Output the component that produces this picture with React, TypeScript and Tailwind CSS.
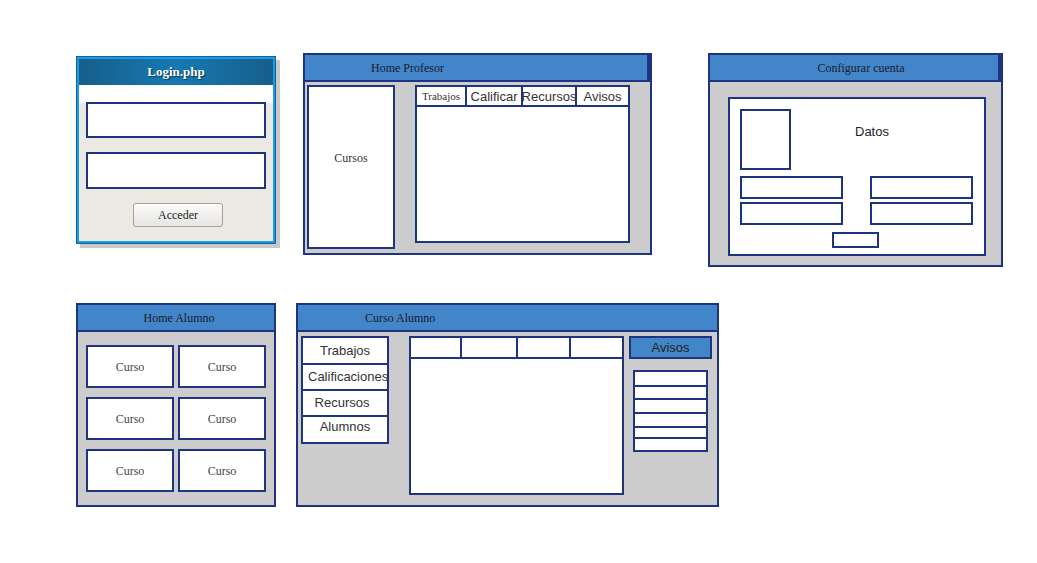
const serif = "font-['Liberation_Serif',serif]";
const sans = "font-['Liberation_Sans',Arial,sans-serif]";

const box = "border-2 border-[#1f3480] bg-white";

function Header({ title, className = "" }: { title: string; className?: string }) {
  return (
    <div
      className={`h-[27px] shrink-0 bg-[#4385c9] border-b-2 border-r-[3px] border-[#1f3480] flex items-center text-[12px] text-[#1a1a2a] ${serif} ${className}`}
    >
      {title}
    </div>
  );
}

function LoginPanel() {
  return (
    <div className="absolute left-[77px] top-[57px] w-[198px] h-[186px] border-2 border-[#1d9be0] shadow-[0_0_0_1px_#0e62a0,4px_4px_0_1px_#c9c9c9] flex flex-col">
      <div
        className={`h-[26px] shrink-0 bg-[linear-gradient(90deg,#175e88,#1679b3_50%,#175e88)] flex items-center justify-center text-white font-bold text-[13px] [text-shadow:1px_1px_1px_#0b3550] ${serif}`}
      >
        Login.php
      </div>
      <div className="flex-1 bg-[linear-gradient(#fff_0,#fff_18px,#ece9e3_18px)] flex flex-col pl-[7px] pt-[17px]">
        <div className={`${box} w-[180px] h-[36px]`} />
        <div className={`${box} w-[180px] h-[37px] mt-[14px]`} />
        <button
          className={`mt-[14px] ml-[47px] w-[90px] h-[24px] rounded-[3px] border border-[#a8a090] bg-[linear-gradient(#fbfbfb,#e6e5e2)] text-[12px] text-[#222] ${serif}`}
        >
          Acceder
        </button>
      </div>
    </div>
  );
}

function HomeProfesor() {
  const tabs = [
    { label: "Trabajos", w: "w-[50px]", f: `${serif} text-[11px]` },
    { label: "Calificar", w: "w-[56px]", f: `${sans} text-[13px]` },
    { label: "Recursos", w: "w-[54px]", f: `${sans} text-[13px]` },
    { label: "Avisos", w: "flex-1", f: `${sans} text-[13px]` },
  ];
  return (
    <div className="absolute left-[303px] top-[53px] w-[349px] h-[202px] border-2 border-[#1f3480] bg-[#cccccc] flex flex-col">
      <Header title="Home Profesor" className="pl-[66px]" />
      <div className="flex pt-[3px] pl-[2px]">
        <div className={`${box} w-[88px] h-[164px] flex justify-center pt-[62px] text-[12px] text-[#333] ${serif}`}>
          Cursos
        </div>
        <div className={`${box} ml-[20px] w-[215px] h-[158px] flex flex-col`}>
          <div className="flex h-[20px] border-b-2 border-[#1f3480]">
            {tabs.map((t, i) => (
              <div
                key={t.label}
                className={`${t.w} ${t.f} ${i < 3 ? "border-r-2 border-[#1f3480]" : ""} flex items-center justify-center whitespace-nowrap overflow-visible text-[#333] leading-none`}
              >
                {t.label}
              </div>
            ))}
          </div>
        </div>
      </div>
    </div>
  );
}

function ConfigurarCuenta() {
  return (
    <div className="absolute left-[708px] top-[53px] w-[295px] h-[214px] border-2 border-[#1f3480] bg-[#cccccc] flex flex-col">
      <Header title="Configurar cuenta" className="justify-center pl-[14px]" />
      <div className={`${box} ml-[18px] mt-[15px] w-[258px] h-[159px] flex flex-col pl-[10px] pt-[10px]`}>
        <div className="flex">
          <div className={`${box} w-[51px] h-[61px]`} />
          <div className={`ml-[64px] mt-[13px] text-[13px] text-[#222] ${sans}`}>Datos</div>
        </div>
        <div className="grid grid-cols-[103px_103px] gap-x-[27px] gap-y-[3px] mt-[6px]">
          <div className={`${box} h-[23px]`} />
          <div className={`${box} h-[23px]`} />
          <div className={`${box} h-[23px]`} />
          <div className={`${box} h-[23px]`} />
        </div>
        <div className={`${box} w-[47px] h-[16px] mt-[7px] ml-[92px]`} />
      </div>
    </div>
  );
}

function HomeAlumno() {
  return (
    <div className="absolute left-[76px] top-[303px] w-[200px] h-[204px] border-2 border-[#1f3480] bg-[#cccccc] flex flex-col">
      <Header title="Home Alumno" className="justify-center pl-[6px] !border-r-0" />
      <div className="grid grid-cols-[88px_88px] gap-x-[4px] gap-y-[9px] ml-[8px] mt-[13px]">
        {Array.from({ length: 6 }).map((_, i) => (
          <div key={i} className={`${box} h-[43px] flex items-center justify-center text-[12px] text-[#444] ${serif}`}>
            Curso
          </div>
        ))}
      </div>
    </div>
  );
}

function CursoAlumno() {
  const menu = [
    { label: "Trabajos", h: "h-[27px]", c: "justify-center items-center" },
    { label: "Calificaciones", h: "h-[26px]", c: "pl-[5px] items-center" },
    { label: "Recursos", h: "h-[26px]", c: "justify-center items-center pr-[6px]" },
    { label: "Alumnos", h: "h-[25px]", c: "justify-center items-start" },
  ];
  const rows = ["h-[15px]", "h-[13px]", "h-[14px]", "h-[14px]", "h-[11px]", "h-[11px]"];
  return (
    <div className="absolute left-[296px] top-[303px] w-[423px] h-[204px] border-2 border-[#1f3480] bg-[#cccccc] flex flex-col">
      <Header title="Curso Alumno" className="pl-[67px] !border-r-0" />
      <div className="flex pt-[4px] pl-[3px]">
        <div className="w-[88px] border-2 border-[#1f3480] bg-white flex flex-col self-start">
          {menu.map((m, i) => (
            <div
              key={m.label}
              className={`${m.h} ${m.c} flex whitespace-nowrap text-[13px] text-[#333] ${sans} ${i < 3 ? "border-b-2 border-[#1f3480]" : ""}`}
            >
              {m.label}
            </div>
          ))}
        </div>
        <div className={`${box} ml-[20px] w-[215px] h-[159px] flex flex-col`}>
          <div className="flex h-[21px] border-b-2 border-[#1f3480]">
            <div className="w-[51px] border-r-2 border-[#1f3480]" />
            <div className="w-[56px] border-r-2 border-[#1f3480]" />
            <div className="w-[53px] border-r-2 border-[#1f3480]" />
            <div className="flex-1" />
          </div>
        </div>
        <div className="ml-[5px] w-[83px] flex flex-col">
          <div className={`h-[23px] border-2 border-[#1f3480] bg-[#4385c9] flex items-center justify-center text-[13px] text-[#222] ${sans}`}>
            Avisos
          </div>
          <div className="ml-[4px] mt-[11px] w-[75px] border-2 border-[#1f3480] bg-white flex flex-col">
            {rows.map((h, i) => (
              <div key={i} className={`${h} ${i < 5 ? "border-b-2 border-[#1f3480]" : ""}`} />
            ))}
          </div>
        </div>
      </div>
    </div>
  );
}

export default function App() {
  return (
    <div className="relative w-[1037px] h-[563px] bg-white overflow-hidden">
      <LoginPanel />
      <HomeProfesor />
      <ConfigurarCuenta />
      <HomeAlumno />
      <CursoAlumno />
    </div>
  );
}
